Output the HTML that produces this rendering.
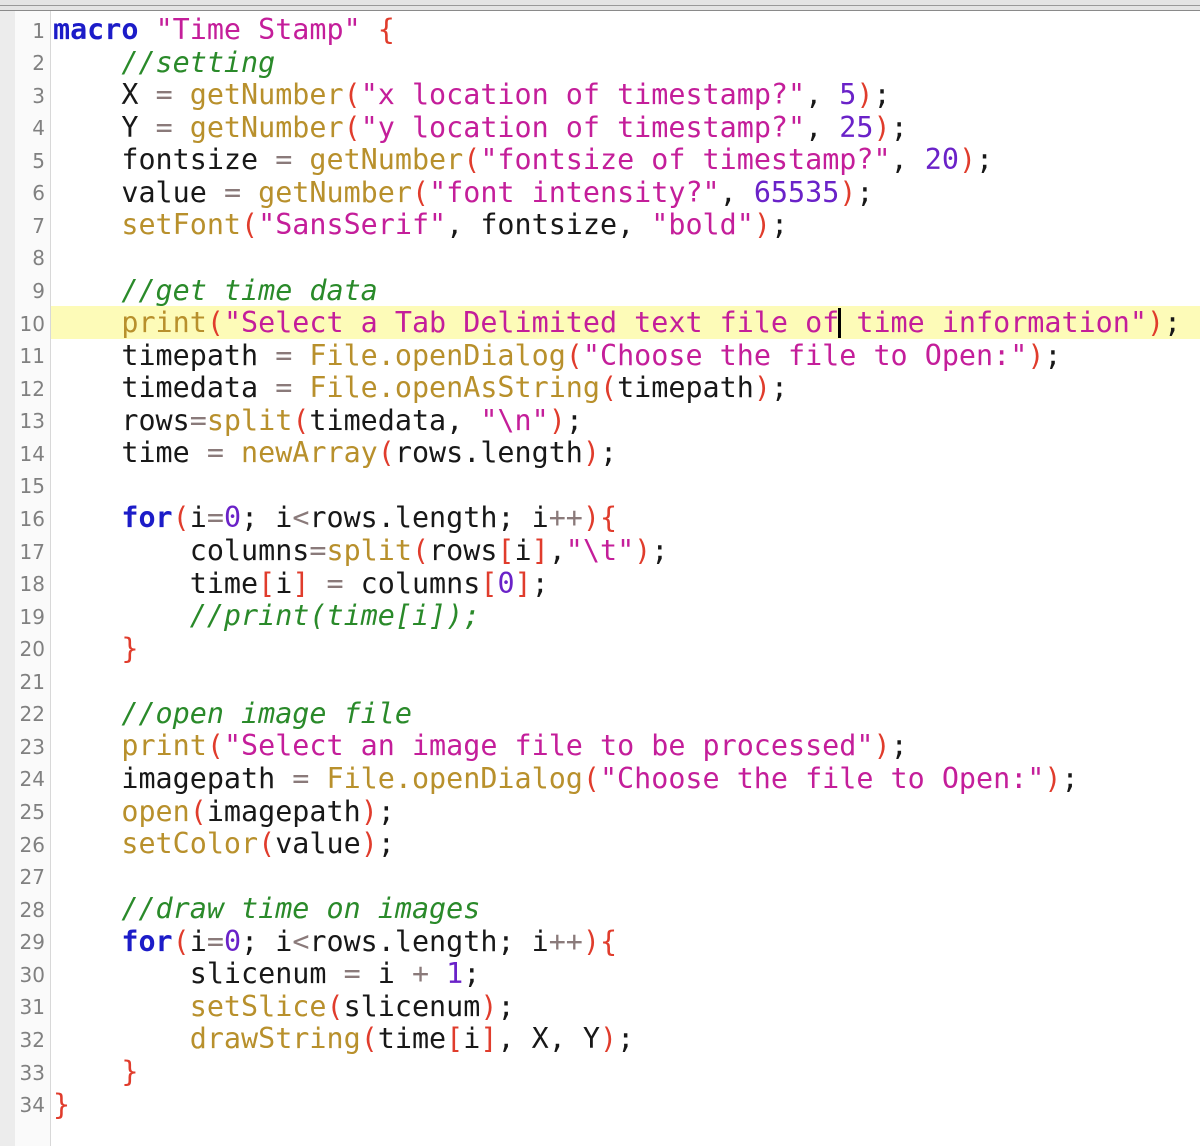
<!DOCTYPE html>
<html><head><meta charset="utf-8"><style>
html,body{margin:0;padding:0;width:1200px;height:1146px;overflow:hidden;background:#fff}
.top{position:absolute;left:0;top:0;width:1200px;height:10px;background:#e4e4e4;border-bottom:1px solid #8a8a8a}
.top:before{content:"";position:absolute;left:0;right:0;top:5px;height:1px;background:#999}
.strip{position:absolute;left:0;top:11px;width:15px;height:1135px;background:#ececec}
.gut{position:absolute;left:15px;top:11px;width:35px;height:1135px;background:#fafafa;border-right:1px solid #d8d8d8}
.hl{position:absolute;left:51px;top:306px;width:1149px;height:33px;background:#fdfbb8}
.nums{position:absolute;left:15px;top:14.5px;width:30px;text-align:right;font:20px/32.56px "DejaVu Sans",sans-serif;color:#808080;margin:0}
pre{position:absolute;left:53px;top:14px;margin:0;font:28.4px/32.56px "DejaVu Sans Mono",monospace;color:#181818;letter-spacing:0}
.k{color:#1c1cc8;font-weight:bold}.s{color:#c41e9a}.f{color:#b8902c}.c{color:#2a8a2a;font-style:italic}.n{color:#6a22c8}.p{color:#e03c2c}.o{color:#8a7a7a}
.cur{display:inline-block;width:3px;height:30px;background:#000;vertical-align:-6px;margin:0 -1.5px}
</style></head><body>
<div class="top"></div><div class="strip"></div><div class="gut"></div><div class="hl"></div>
<div class="nums">1<br>2<br>3<br>4<br>5<br>6<br>7<br>8<br>9<br>10<br>11<br>12<br>13<br>14<br>15<br>16<br>17<br>18<br>19<br>20<br>21<br>22<br>23<br>24<br>25<br>26<br>27<br>28<br>29<br>30<br>31<br>32<br>33<br>34</div>
<pre><span class="k">macro</span> <span class="s">"Time Stamp"</span> <span class="p">{</span>
    <span class="c">//setting</span>
    X <span class="o">=</span> <span class="f">getNumber</span><span class="p">(</span><span class="s">"x location of timestamp?"</span>, <span class="n">5</span><span class="p">)</span>;
    Y <span class="o">=</span> <span class="f">getNumber</span><span class="p">(</span><span class="s">"y location of timestamp?"</span>, <span class="n">25</span><span class="p">)</span>;
    fontsize <span class="o">=</span> <span class="f">getNumber</span><span class="p">(</span><span class="s">"fontsize of timestamp?"</span>, <span class="n">20</span><span class="p">)</span>;
    value <span class="o">=</span> <span class="f">getNumber</span><span class="p">(</span><span class="s">"font intensity?"</span>, <span class="n">65535</span><span class="p">)</span>;
    <span class="f">setFont</span><span class="p">(</span><span class="s">"SansSerif"</span>, fontsize, <span class="s">"bold"</span><span class="p">)</span>;

    <span class="c">//get time data</span>
    <span class="f">print</span><span class="p">(</span><span class="s">"Select a Tab Delimited text file of<span class="cur"></span> time information"</span><span class="p">)</span>;
    timepath <span class="o">=</span> <span class="f">File.openDialog</span><span class="p">(</span><span class="s">"Choose the file to Open:"</span><span class="p">)</span>;
    timedata <span class="o">=</span> <span class="f">File.openAsString</span><span class="p">(</span>timepath<span class="p">)</span>;
    rows<span class="o">=</span><span class="f">split</span><span class="p">(</span>timedata, <span class="s">"\n"</span><span class="p">)</span>;
    time <span class="o">=</span> <span class="f">newArray</span><span class="p">(</span>rows.length<span class="p">)</span>;

    <span class="k">for</span><span class="p">(</span>i<span class="o">=</span><span class="n">0</span>; i<span class="o">&lt;</span>rows.length; i<span class="o">++</span><span class="p">){</span>
        columns<span class="o">=</span><span class="f">split</span><span class="p">(</span>rows<span class="p">[</span>i<span class="p">]</span>,<span class="s">"\t"</span><span class="p">)</span>;
        time<span class="p">[</span>i<span class="p">]</span> <span class="o">=</span> columns<span class="p">[</span><span class="n">0</span><span class="p">]</span>;
        <span class="c">//print(time[i]);</span>
    <span class="p">}</span>

    <span class="c">//open image file</span>
    <span class="f">print</span><span class="p">(</span><span class="s">"Select an image file to be processed"</span><span class="p">)</span>;
    imagepath <span class="o">=</span> <span class="f">File.openDialog</span><span class="p">(</span><span class="s">"Choose the file to Open:"</span><span class="p">)</span>;
    <span class="f">open</span><span class="p">(</span>imagepath<span class="p">)</span>;
    <span class="f">setColor</span><span class="p">(</span>value<span class="p">)</span>;

    <span class="c">//draw time on images</span>
    <span class="k">for</span><span class="p">(</span>i<span class="o">=</span><span class="n">0</span>; i<span class="o">&lt;</span>rows.length; i<span class="o">++</span><span class="p">){</span>
        slicenum <span class="o">=</span> i <span class="o">+</span> <span class="n">1</span>;
        <span class="f">setSlice</span><span class="p">(</span>slicenum<span class="p">)</span>;
        <span class="f">drawString</span><span class="p">(</span>time<span class="p">[</span>i<span class="p">]</span>, X, Y<span class="p">)</span>;
    <span class="p">}</span>
<span class="p">}</span></pre>
</body></html>
